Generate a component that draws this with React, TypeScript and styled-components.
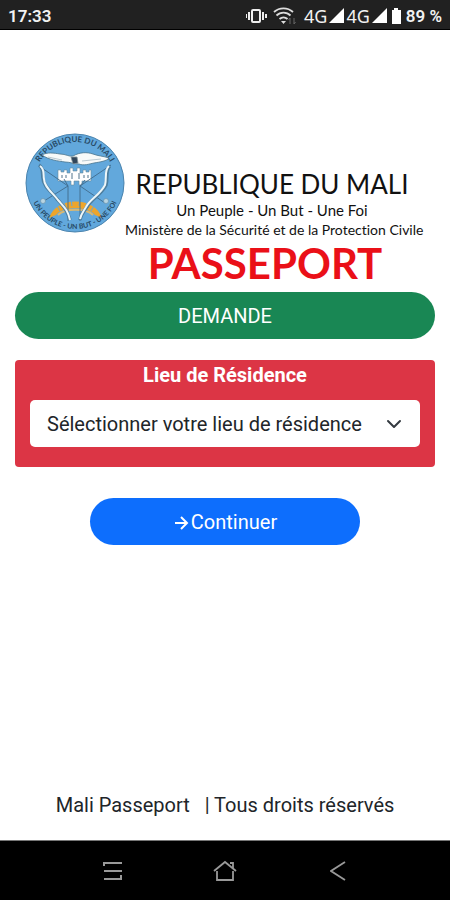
import React from "react";
import styled, { createGlobalStyle } from "styled-components";

const GlobalStyle = createGlobalStyle`
  *, *::before, *::after { box-sizing: border-box; }
  body {
    margin: 0;
    background: #fff;
    color: #212529;
    font-family: Roboto, "Liberation Sans", sans-serif;
    font-size: 20px;
    line-height: 30px;
  }
`;

const Screen = styled.div`
  display: flex;
  flex-direction: column;
  min-height: 100vh;
`;

const StatusBar = styled.header`
  display: flex;
  align-items: center;
  justify-content: space-between;
  height: 30px;
  padding: 2px 8px 0;
  background: #212121;
  border-bottom: 1px solid #000;
  color: #f2f2f2;
  font-size: 17px;
  font-weight: 600;
`;

const StatusIcons = styled.div`
  display: flex;
  align-items: center;
  gap: 2px;
`;

const Network = styled.span`
  font-family: "Noto Sans", sans-serif;
  font-size: 18px;
  font-weight: 400;
`;

const Content = styled.main`
  flex: 1;
  padding: 103px 15px 0;
`;

const Banner = styled.div`
  display: flex;
  align-items: flex-start;
  padding: 0 16px 0 10px;
`;

const Crest = styled.svg`
  flex: none;
  width: 100px;
  height: 100px;
`;

const BannerText = styled.div`
  flex: 1;
  min-width: 0;
  padding-top: 35px;
  font-family: Lato, sans-serif;
  font-variant-ligatures: none;
  color: #111;
  text-align: center;
  white-space: nowrap;
`;

const Country = styled.div`
  font-size: 26px;
  line-height: 32px;
`;

const Motto = styled.div<{ $small?: boolean }>`
  font-size: ${(p) => (p.$small ? 14 : 15)}px;
  line-height: 20px;
`;

const Title = styled.h1`
  margin: 0 0 6px;
  padding-right: 14px;
  color: #ea1018;
  font-size: 42px;
  font-weight: 700;
  line-height: 46px;
`;

const PillButton = styled.button<{ $tone: string; $width: string }>`
  display: flex;
  align-items: center;
  justify-content: center;
  gap: 2px;
  width: ${(p) => p.$width};
  height: 47px;
  margin: 0 auto;
  border: 0;
  border-radius: 24px;
  background: ${(p) => p.$tone};
  color: #fff;
  font: inherit;
`;

const Card = styled.section`
  display: flex;
  flex-direction: column;
  margin: 21px 0 31px;
  padding: 0 15px 20px;
  border-radius: 4px;
  background: #dc3545;
`;

const CardLabel = styled.label`
  margin-bottom: 10px;
  color: #fff;
  font-weight: 700;
  text-align: center;
`;

const SelectBox = styled.div`
  display: grid;
  align-items: center;

  & > * { grid-area: 1 / 1; }
  & > svg { justify-self: end; margin-right: 18px; pointer-events: none; }
`;

const Select = styled.select`
  appearance: none;
  width: 100%;
  height: 47px;
  padding: 0 44px 0 17px;
  border: 0;
  border-radius: 5px;
  background: #fff;
  color: #212529;
  font: inherit;
`;

const Footer = styled.footer`
  padding: 0 15px 20px;
  text-align: center;
  white-space: pre;
`;

const NavBar = styled.nav`
  display: grid;
  grid-template-columns: repeat(3, 1fr);
  justify-items: center;
  height: 60px;
  padding: 0 56px;
  border-top: 1px solid #777;
  background: #000;
`;

const NavButton = styled.button`
  display: flex;
  align-items: center;
  padding: 0;
  border: 0;
  background: none;
  color: #999;
`;

function MaliCrest() {
  return (
    <Crest viewBox="0 0 100 100" role="img" aria-label="République du Mali">
      <defs>
        <path id="arcTop" d="M9 50a41 41 0 0 1 82 0" />
        <path id="arcBottom" d="M4 50a46 46 0 0 0 92 0" />
      </defs>
      <circle cx="50" cy="50" r="49" fill="#62a8dc" stroke="#4a83ad" />
      <path d="M24 85C31 63 70 63 77 85L70 82C64 73 37 73 31 82z" fill="#eda52c" />
      <path d="M31 71l4 7M38 67l3 8M46 65l1 8M55 65l-1 8M63 67l-3 8M70 71l-4 7" stroke="#62a8dc" strokeWidth="1" />
      <path d="M33 82C40 75 61 75 68 82" fill="none" stroke="#d9b873" strokeWidth="2" />
      <g fill="#274a66" fontFamily="Lato, sans-serif" fontWeight="700" textAnchor="middle">
        <text fontSize="8"><textPath href="#arcTop" startOffset="50%">REPUBLIQUE DU MALI</textPath></text>
        <text fontSize="7"><textPath href="#arcBottom" startOffset="50%">UN PEUPLE - UN BUT - UNE FOI</textPath></text>
      </g>
      <path d="M17 22c5-3 12-2 18-1 6 0 9 3 13 2 7-4 14-4 20-2 5 2 10 2 16 4-2 3-9 4-15 5-5 1-10 3-15 1-5 0-9-2-14-2-7-1-16-2-23-7z" fill="#f8faf9" stroke="#48738d" strokeWidth=".8" />
      <path d="M46 24l6 0 1 6-5 1z" fill="#31465a" stroke="#81939a" strokeWidth=".8" />
      <path d="M23 24l14 3M57 28l19-2" stroke="#a9bcc6" strokeWidth=".8" />
      <path d="M33 37h3v2h3v-2h3v3h3v-5h3v3h4v-3h3v5h3v-3h3v2h3v-2h2v11h-9v4h-3v-4h-5v4h-3v-4H33z" fill="#fff" stroke="#69899a" strokeWidth=".6" />
      <path d="M37 42v3m4-3v3m6-5v6m7-6v6m5-4v3m4-3v3" stroke="#53758c" />
      <path d="M14 33l29 20v35M86 32L55 53v35M19 68l24-15-4-7M80 70L55 53l5-6" fill="none" stroke="#416b8b" strokeWidth=".9" />
      <path d="M14 32c5 3 3 9 4 13 0 8 9 14 14 21 6 7 10 10 13 21M85 33c-5 4-2 12-4 19-5 10-15 14-19 22-4 5-6 7-7 13" fill="none" stroke="#4d7e9f" strokeWidth="3.5" />
      <path d="M15 33c5 3 3 9 4 13 0 8 9 14 14 21 6 7 10 10 12 20M84 33c-5 4-2 12-4 19-5 10-15 14-19 22-3 5-5 7-6 12" fill="none" stroke="#edf6f9" strokeWidth="2" />
      <g fill="#b9d5e3" stroke="#6893ad" strokeWidth=".7"><circle cx="18" cy="68" r="2.5" /><circle cx="81" cy="68" r="2.5" /></g>
    </Crest>
  );
}

const Signal = () => (
  <svg width="15" height="15" viewBox="0 0 15 15" aria-hidden="true">
    <path d="M15 0v15H0z" fill="#fff" />
  </svg>
);

export default function App() {
  return (
    <>
      <GlobalStyle />
      <Screen>
        <StatusBar>
          <span>17:33</span>
          <StatusIcons>
            <svg width="22" height="16" viewBox="0 0 22 16" fill="none" stroke="#eee" strokeWidth="2" aria-hidden="true">
              <rect x="6" y="2" width="8" height="12" rx="1" />
              <path d="M3 4v8M17 4v8M0 6v4M20 6v4" />
            </svg>
            <svg width="32" height="18" viewBox="4 0 32 18" fill="none" stroke="#ddd" strokeWidth="1.8" aria-hidden="true">
              <path d="M8 5a14 14 0 0 1 19 0M10.500 8.500a10 10 0 0 1 14 0M13.500 12a6 6 0 0 1 8 0" />
              <path d="M15 14h5l-2.500 3z" fill="#ddd" stroke="none" />
              <path d="M24 11v6m-1.500-4 1.500-2M28 11v6m1.500-2-1.500 2" stroke="#666" strokeWidth="1" />
            </svg>
            <Network>4G</Network>
            <Signal />
            <Network>4G</Network>
            <Signal />
            <svg width="15" height="16" viewBox="0 0 15 16" aria-hidden="true">
              <path d="M5 0h4v2h3v14H3V2h2z" fill="#fff" />
            </svg>
            <span>89 %</span>
          </StatusIcons>
        </StatusBar>

        <Content>
          <Banner>
            <MaliCrest />
            <BannerText>
              <Country>REPUBLIQUE DU MALI</Country>
              <Motto>Un Peuple - Un But - Une Foi</Motto>
              <Motto $small>Ministère de la Sécurité et de la Protection Civile</Motto>
              <Title>PASSEPORT</Title>
            </BannerText>
          </Banner>

          <PillButton type="button" $tone="#198754" $width="100%">DEMANDE</PillButton>

          <Card>
            <CardLabel htmlFor="residence">Lieu de Résidence</CardLabel>
            <SelectBox>
              <Select id="residence" defaultValue="">
                <option value="">Sélectionner votre lieu de résidence</option>
              </Select>
              <svg width="16" height="16" viewBox="0 0 16 16" fill="none" stroke="#343a40" strokeWidth="2" strokeLinecap="round" strokeLinejoin="round" aria-hidden="true">
                <path d="M2 5l6 6 6-6" />
              </svg>
            </SelectBox>
          </Card>

          <PillButton type="button" $tone="#0d6efd" $width="calc(100% - 150px)">
            <svg width="16" height="16" viewBox="0 0 16 16" fill="none" stroke="#fff" strokeWidth="2" aria-hidden="true">
              <path d="M2 9h12M8 3l6 6-6 6" />
            </svg>
            Continuer
          </PillButton>
        </Content>

        <Footer>{"Mali Passeport \u00a0 | Tous droits réservés"}</Footer>

        <NavBar>
          <NavButton type="button" aria-label="Menu">
            <svg width="20" height="20" viewBox="0 0 20 20" fill="none" stroke="currentColor" strokeWidth="2" aria-hidden="true">
              <path d="M2 5V2h18M2 10h18M2 18h17v-4" />
            </svg>
          </NavButton>
          <NavButton type="button" aria-label="Accueil">
            <svg width="24" height="22" viewBox="0 0 24 22" fill="none" stroke="currentColor" strokeWidth="1.800" aria-hidden="true">
              <path d="M1 11L12 2l11 9M4 11v9h16v-9M20 8V3h-3" />
            </svg>
          </NavButton>
          <NavButton type="button" aria-label="Retour">
            <svg width="16" height="20" viewBox="0 0 16 20" fill="none" stroke="currentColor" strokeWidth="1.800" aria-hidden="true">
              <path d="M15 1L1 10l14 9" />
            </svg>
          </NavButton>
        </NavBar>
      </Screen>
    </>
  );
}
